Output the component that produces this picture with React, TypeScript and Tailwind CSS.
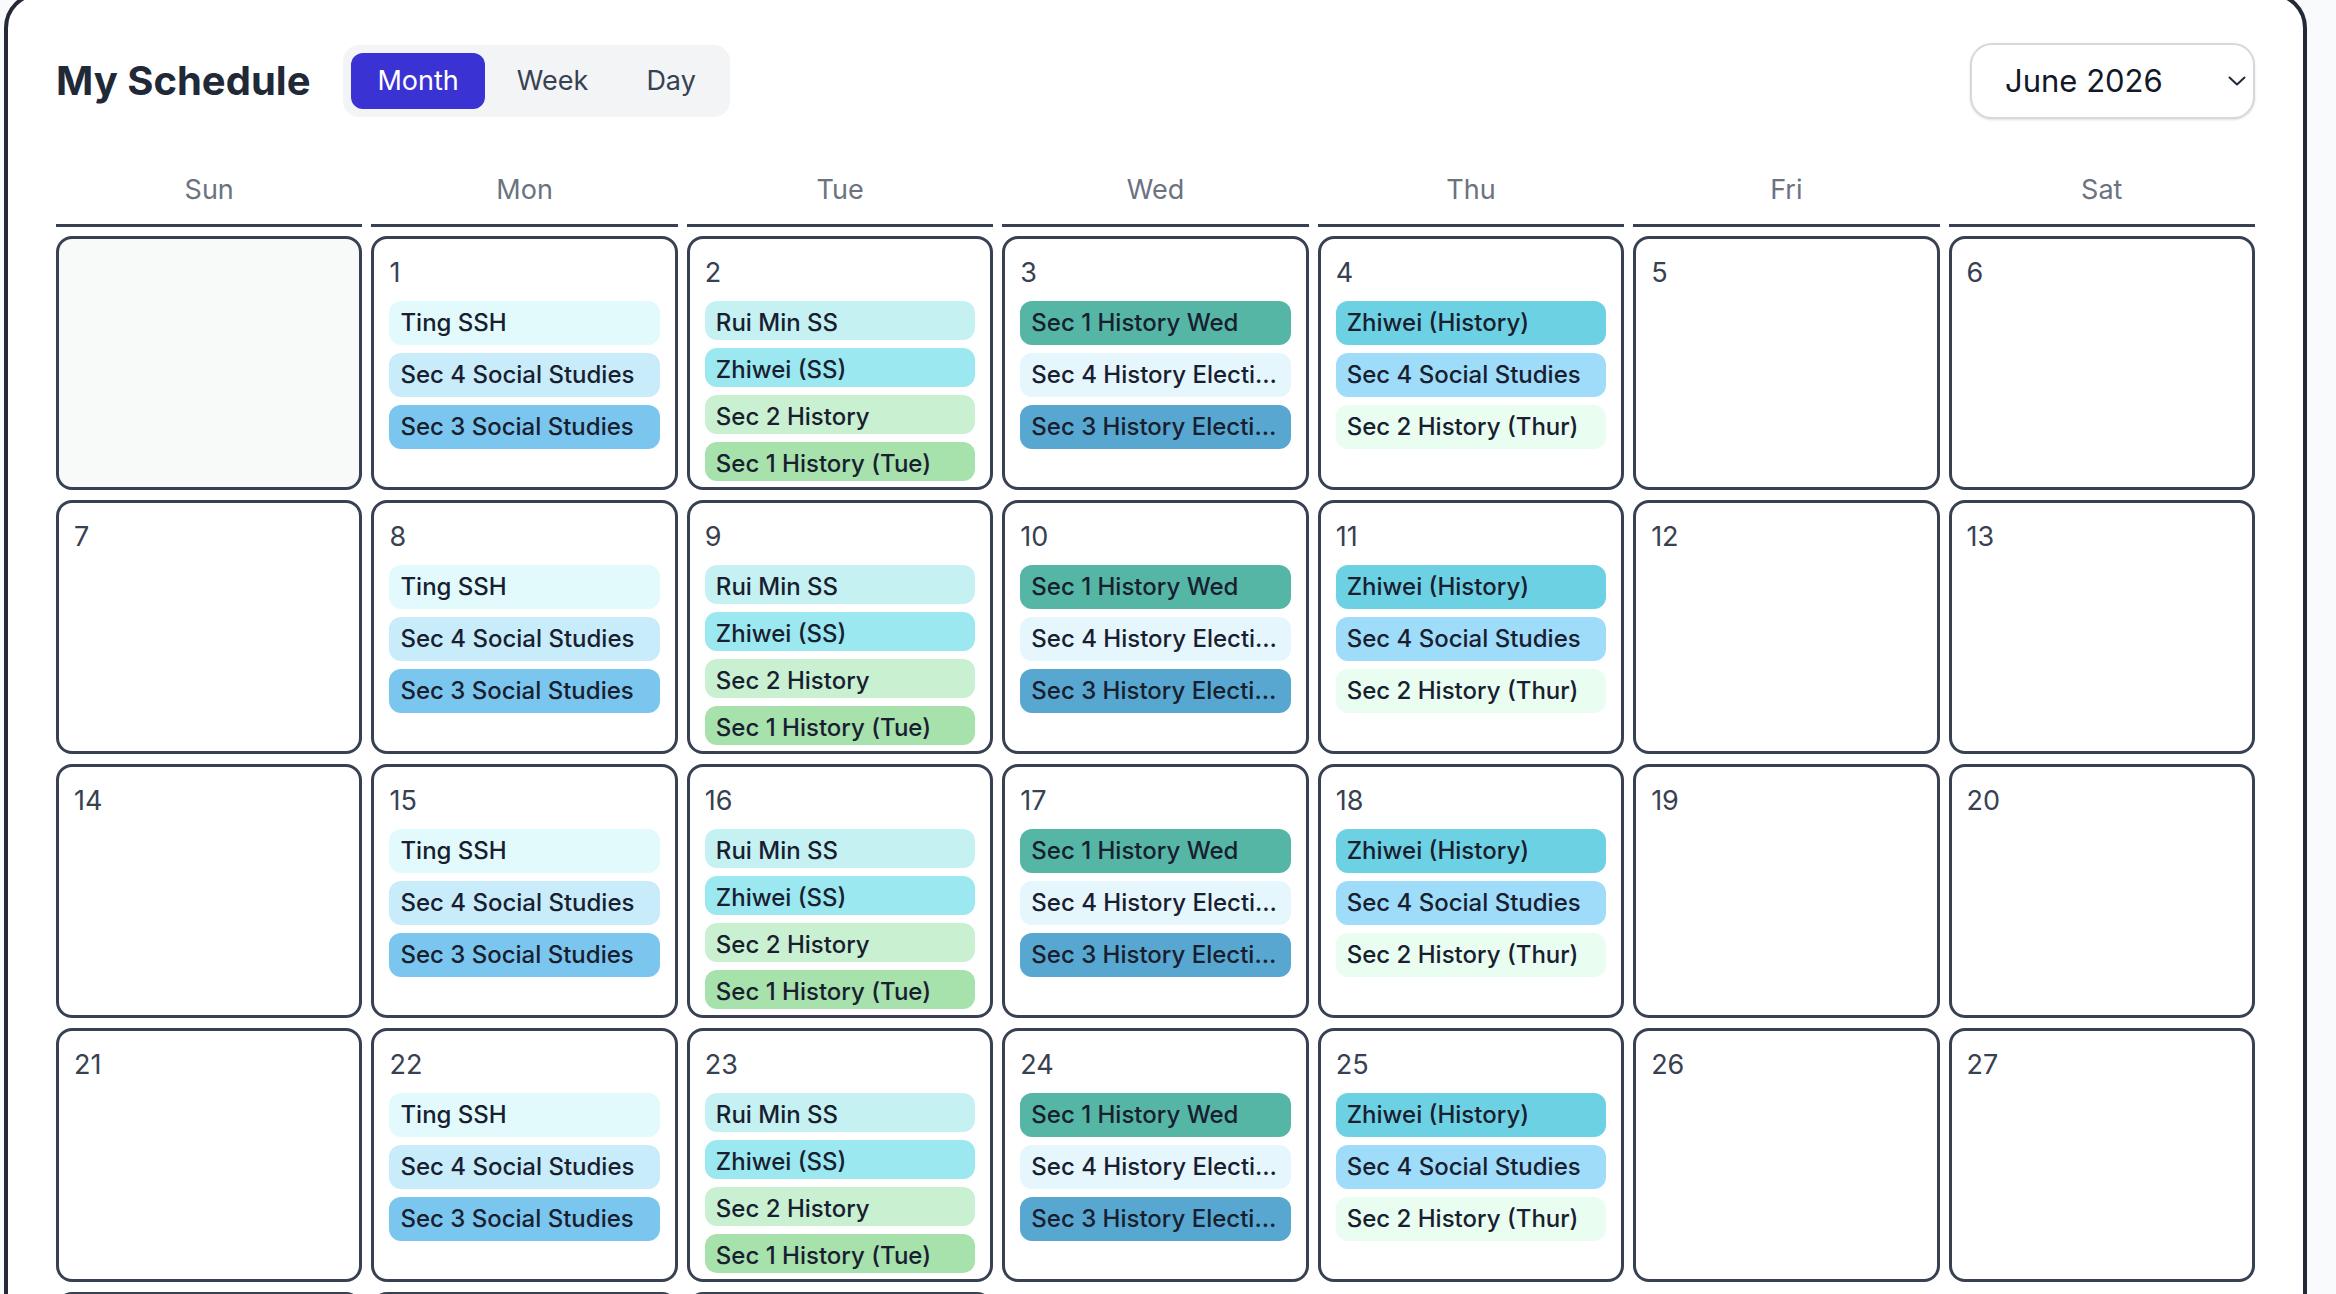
import React from 'react';

type CalEvent = { title: string; color: string };

const weekdays = ['Sun', 'Mon', 'Tue', 'Wed', 'Thu', 'Fri', 'Sat'];

// recurring classes, keyed by day of week
const weeklyEvents: Record<number, CalEvent[]> = {
  1: [
    { title: 'Ting SSH', color: 'bg-[#e3fafc]' },
    { title: 'Sec 4 Social Studies', color: 'bg-[#c8ecfa]' },
    { title: 'Sec 3 Social Studies', color: 'bg-[#7bc6ee]' },
  ],
  2: [
    { title: 'Rui Min SS', color: 'bg-[#c6f1f3]' },
    { title: 'Zhiwei (SS)', color: 'bg-[#9be8f0]' },
    { title: 'Sec 2 History', color: 'bg-[#c9f0d1]' },
    { title: 'Sec 1 History (Tue)', color: 'bg-[#a7e1ab]' },
  ],
  3: [
    { title: 'Sec 1 History Wed', color: 'bg-[#55b6a5]' },
    { title: 'Sec 4 History Elective', color: 'bg-[#e6f6fd]' },
    { title: 'Sec 3 History Elective', color: 'bg-[#58a7d0]' },
  ],
  4: [
    { title: 'Zhiwei (History)', color: 'bg-[#6cd1e2]' },
    { title: 'Sec 4 Social Studies', color: 'bg-[#9edcfa]' },
    { title: 'Sec 2 History (Thur)', color: 'bg-[#e9fdf0]' },
  ],
};

const views = ['Month', 'Week', 'Day'];

function buildDays(year: number, month: number) {
  const first = new Date(year, month, 1).getDay();
  const total = new Date(year, month + 1, 0).getDate();
  const days: (number | null)[] = [];
  for (let i = 0; i < first; i++) days.push(null);
  for (let d = 1; d <= total; d++) days.push(d);
  return days;
}

const DayCell: React.FC<{ day: number | null; weekday: number }> = ({ day, weekday }) => {
  if (day === null) {
    return <div className="h-[254px] rounded-[16px] border-[3px] border-[#374151] bg-[#f8fafa]" />;
  }
  const events = weeklyEvents[weekday] || [];
  // four items get squeezed into the same cell height
  const compact = events.length > 3;

  return (
    <div className="flex h-[254px] flex-col overflow-hidden rounded-[16px] border-[3px] border-[#374151] bg-white px-[15px] pt-[16px]">
      <div className="text-[27px] leading-[36px] text-[#374151]">{day}</div>
      <div className="mt-[10px] flex flex-col gap-[8px]">
        {events.map((ev, idx) => (
          <div
            key={idx}
            className={`${ev.color} ${
              compact ? 'h-[39px]' : 'h-[44px]'
            } truncate rounded-[12px] px-[11px] text-[24px] leading-[44px] font-medium text-[#182030]`}
          >
            {ev.title}
          </div>
        ))}
      </div>
    </div>
  );
};

export default function App() {
  const days = buildDays(2026, 5);

  return (
    <div className="min-h-screen bg-[#f9fafb] pl-[4px] pr-[29px] font-['Inter',sans-serif]">
      <div className="-mt-[8px] rounded-[36px] border-4 border-[#232a36] bg-white px-[48px] pt-[47px] pb-[48px]">
        {/* Header */}
        <div className="flex h-[76px] items-center justify-between">
          <div className="flex items-center gap-[33px]">
            <h1 className="text-[40px] font-bold text-[#1f2937]">My Schedule</h1>
            <div className="flex items-center gap-[6px] rounded-[16px] bg-[#f3f4f6] p-[8px]">
              {views.map(v => (
                <button
                  key={v}
                  className={`h-[56px] rounded-[12px] px-[26px] text-[27px] ${
                    v === 'Month' ? 'bg-[#3b32d4] text-white' : 'text-[#374151]'
                  }`}
                >
                  {v}
                </button>
              ))}
            </div>
          </div>
          <button className="flex h-[76px] w-[285px] items-center rounded-[22px] border-2 border-[#d5d8dd] bg-white pl-[33px] pr-[7px] shadow-sm">
            <span className="text-[31px] text-[#111827]">June 2026</span>
            <svg className="ml-auto" width="18" height="10" viewBox="0 0 18 10" fill="none">
              <path d="M1.5 1.5l7.5 7 7.5-7" stroke="#1f2937" strokeWidth="2" strokeLinecap="round" strokeLinejoin="round" />
            </svg>
          </button>
        </div>

        {/* Weekday names */}
        <div className="mt-[53px] grid grid-cols-7 gap-x-[9px]">
          {weekdays.map(d => (
            <div
              key={d}
              className="border-b-[3px] border-[#374151] pb-[16px] text-center text-[27px] leading-[36px] text-[#6b7280]"
            >
              {d}
            </div>
          ))}
        </div>

        {/* Month grid */}
        <div className="mt-[9px] grid grid-cols-7 gap-x-[9px] gap-y-[10px]">
          {days.map((day, i) => (
            <DayCell key={i} day={day} weekday={i % 7} />
          ))}
        </div>
      </div>
    </div>
  );
}
